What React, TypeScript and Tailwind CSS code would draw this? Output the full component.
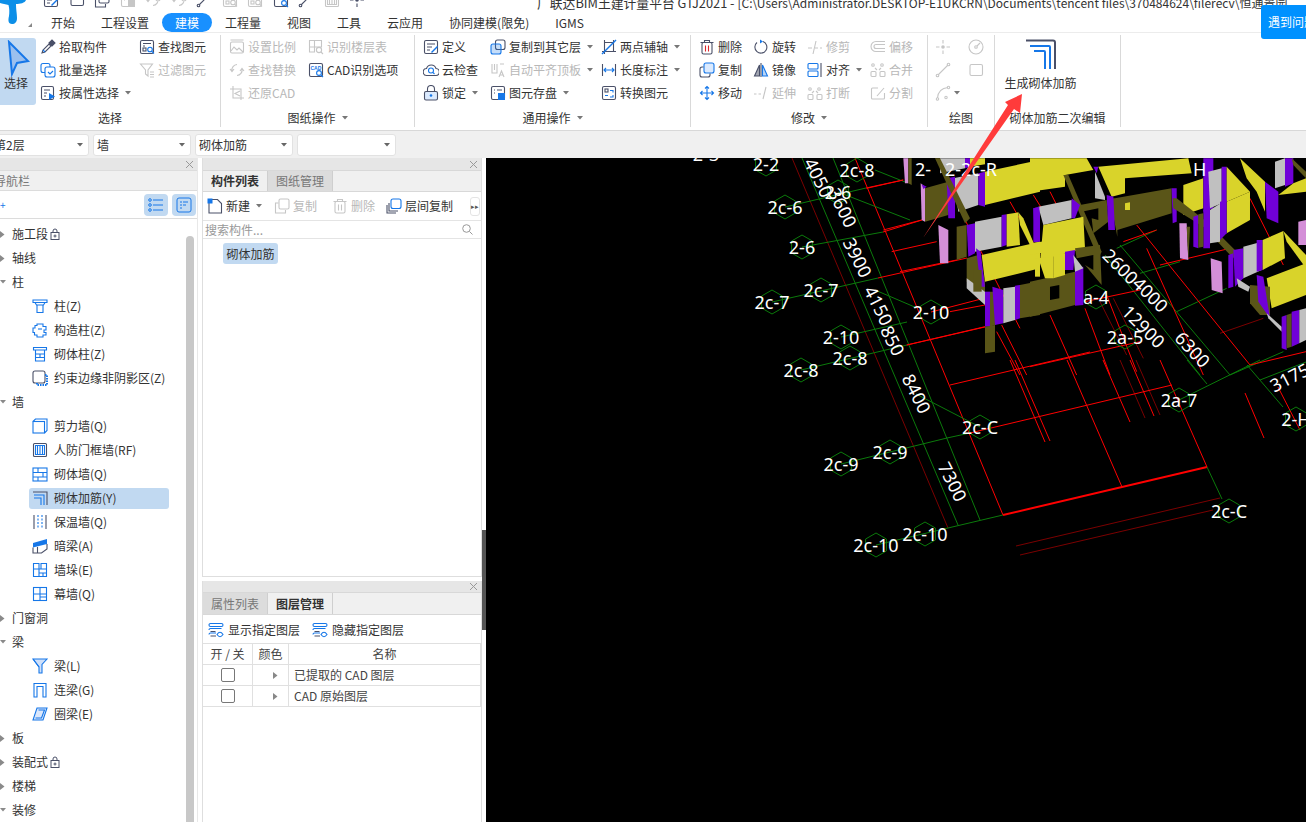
import React from "react";

const D = "#4a5068";
const B = "#1677e8";
const G = "#c6c6c6";
type P = { d: string; b: string };
const icons: Record<string, (p: P) => React.ReactNode> = {
  pick: ({ d, b }) => (<><path d="M2 14l1-3 6-6 2 2-6 6z" stroke={d} /><path d="M9 4l3-3 3 3-3 3z" fill={d} stroke={d} /><path d="M3 11l2 2" stroke={b} /></>),
  batch: ({ d, b }) => (<><rect x="1" y="1.500" width="9" height="9" rx="2" stroke={b} /><rect x="5" y="5" width="10" height="10" rx="2" stroke={b} fill="#fff" /><path d="M8 10l2 2 3-3" stroke={b} /></>),
  attr: ({ d, b }) => (<><rect x="1.500" y="1.500" width="12" height="13" rx="1.500" stroke={d} /><path d="M4 5h6M4 8h3M4 11h2" stroke={d} /><path d="M9 8l6 3.500-6 3.500z" fill={b} /></>),
  find: ({ d, b }) => (<><rect x="1.500" y="1.500" width="13" height="13" rx="1.500" stroke={d} /><path d="M4 4.500h8M4 7h2" stroke={d} /><rect x="4" y="9" width="3" height="3" stroke={d} /><circle cx="11" cy="10.500" r="2.300" stroke={b} /><path d="M13 12.500l2 2" stroke={b} /></>),
  filter: ({ d }) => (<><path d="M1.500 2h12L9 8v6L6.500 12V8z" stroke={d} /><path d="M11 10h4M11 12.500h4M11 15h4" stroke={d} /></>),
  scale: ({ d }) => (<><rect x="1.500" y="3" width="13" height="11" rx="1.500" stroke={d} /><path d="M2 12l3-4 3 3 2-2 4 4M1.500 1h13" stroke={d} /></>),
  floor: ({ d }) => (<><path d="M1.500 8V1.500h5V13h-5V8h12V1.500h-7M1.500 13" stroke={d} /><circle cx="11" cy="11" r="2.600" stroke={d} /><path d="M13 13l2 2" stroke={d} /></>),
  swap: ({ d }) => (<><path d="M3 9a5.500 5.500 0 0 1 5-6.500M13 7a5.500 5.500 0 0 1-5 6.500M1 7l2 2.500L5 7M11 9l2-2.500L15 9" stroke={d} /></>),
  cadopt: ({ d, b }) => (<><rect x="1.500" y="1.500" width="13" height="13" rx="1.500" stroke={d} /><text x="2.500" y="8" fontSize="5" fill={b} stroke="none" fontWeight="700" fontFamily="Liberation Sans">CAD</text><circle cx="11" cy="11" r="2.400" stroke={b} fill="#fff" /><path d="M13 13l2 2" stroke={b} /></>),
  restore: ({ d }) => (<><path d="M4 1v12h11M1 4h11v11" stroke={d} /><path d="M11 6L6 8.500 11 11" stroke={d} /></>),
  define: ({ d, b }) => (<><rect x="1.500" y="1.500" width="13" height="13" rx="1.500" stroke={d} /><path d="M4 5h8M4 8h5M4 11h3" stroke={d} /><path d="M8 13l6-6 1 1-6 6z" fill={b} /></>),
  cloud: ({ d, b }) => (<><path d="M4 13.500a3.500 3.500 0 0 1-.5-7 5 5 0 0 1 9.500 0 3.500 3.500 0 0 1-.500 7z" stroke={d} /><circle cx="8" cy="8.500" r="2.500" stroke={b} /><path d="M10 10.500l1.500 1.500" stroke={b} /></>),
  lock: ({ d, b }) => (<><rect x="1.500" y="6.500" width="13" height="8.500" rx="1.500" stroke={d} fill="#dbeafe" /><path d="M4.500 6.500V4a3.500 3.500 0 0 1 7 0v2.500" stroke={d} /><circle cx="8" cy="10.500" r="1.300" fill={b} /></>),
  copyto: ({ d, b }) => (<><rect x="5.500" y="1" width="9.500" height="9.500" rx="2" stroke={d} /><rect x="1" y="5" width="10" height="10" rx="2" fill={b} fillOpacity="0.25" stroke={b} /></>),
  autoalign: ({ d }) => (<><path d="M2 2v9h5V2M4.500 2v6M10 2h4" stroke={d} /><path d="M9 15l2.500-6 2.500 6M10 13h3" stroke={d} /></>),
  save: ({ d, b }) => (<><rect x="1.500" y="1.500" width="13" height="13" rx="1.500" stroke={d} /><path d="M4 5h1M7 5h5M4 8h1" stroke={d} /><rect x="8" y="8" width="7" height="7" fill={b} /></>),
  twopt: ({ d, b }) => (<><path d="M3.500 1v14M1 12.500h14M12.500 1v11M3.500 3.500h9" stroke={d} /><path d="M1 15L15 1" stroke={b} strokeWidth="1.500" /></>),
  dim: ({ d, b }) => (<><path d="M1.500 2v12M14.500 2v12" stroke={d} /><path d="M3 8h10M5 6L3 8l2 2M11 6l2 2-2 2" stroke={b} /></>),
  convert: ({ d, b }) => (<><rect x="1.500" y="1.500" width="13" height="13" rx="1.500" stroke={d} /><rect x="4" y="4" width="3" height="3" stroke={d} /><path d="M9 5.500h3v2M7 10.500H4M9 12h3v-2" stroke={b} /></>),
  del: ({ d }) => (<><path d="M1.500 3.500h13M5.500 3V1.500h5V3" stroke={d} /><rect x="3" y="3.500" width="10" height="11.500" rx="1.500" stroke={d} /><path d="M6.500 6.500v6M9.500 6.500v6" stroke={d === G ? G : "#d9262c"} /></>),
  copy: ({ b, d }) => (<><rect x="5" y="1" width="10" height="10" rx="2" stroke={b} fill="#dbeafe" /><path d="M4.500 5H3a2 2 0 0 0-2 2v6a2 2 0 0 0 2 2h6a2 2 0 0 0 2-2v-1.500" stroke={d} /></>),
  move: ({ b }) => (<><path d="M8 2v12M2 8h12M6 3.500L8 1.500l2 2M6 12.500l2 2 2-2M3.500 6L1.500 8l2 2M12.500 6l2 2-2 2" stroke={b} /></>),
  rotate: ({ d, b }) => (<><path d="M10 2.500A6 6 0 1 1 4 3.500" stroke={d} /><path d="M7 .5l3 2-3 2z" fill={b} /></>),
  mirror: ({ d, b }) => (<><path d="M8 1v14" stroke={d} /><path d="M6.500 3L1.500 14h5z" fill={d} fillOpacity=".5" stroke={d} /><path d="M9.500 3l5 11h-5z" fill={b} fillOpacity=".3" stroke={b} /></>),
  extend: ({ d }) => (<><path d="M1 9h2.500M5.500 9H8M10 14l3-12" stroke={d} /></>),
  trim: ({ d }) => (<><path d="M1 9h4M8 9h3M6 15l3-13M13 9h2" stroke={d} /></>),
  align: ({ b, d }) => (<><rect x="1" y="1.500" width="10" height="5.500" rx="1" stroke={b} /><rect x="1" y="9" width="10" height="5.500" rx="1" stroke={b} /><path d="M14 1v14" stroke={d} /></>),
  breakk: ({ d }) => (<><circle cx="3" cy="4" r="1.300" stroke={d} /><circle cx="12" cy="4" r="1.300" stroke={d} /><rect x="1" y="9.500" width="5" height="5" rx="1" stroke={d} /><rect x="10" y="9.500" width="5" height="5" rx="1" stroke={d} /><path d="M7 6L5 8M9 6l2 2" stroke={d} /></>),
  offset: ({ d }) => (<><path d="M15 2.500H6a5 5 0 0 0 0 10h9M15 5.500H6a2 2 0 0 0 0 4h9" stroke={d} /></>),
  merge: ({ d }) => (<><rect x="1" y="9.500" width="5" height="5" rx="1" stroke={d} /><rect x="10" y="9.500" width="5" height="5" rx="1" stroke={d} /><circle cx="3" cy="3" r="1.300" stroke={d} /><circle cx="12" cy="3" r="1.300" stroke={d} /><path d="M5 6l2 2M11 6L9 8" stroke={d} /></>),
  split: ({ d }) => (<><path d="M8 3H2.500a1 1 0 0 0-1 1v9a1 1 0 0 0 1 1h11a1 1 0 0 0 1-1V8" stroke={d} /><path d="M7 11l7-8" stroke={d} /></>),
  point: ({ d }) => (<><circle cx="8" cy="8" r="1.800" fill={d} /><path d="M8 1v3.500M8 11.500V15M1 8h3.500M11.500 8H15" stroke={d} /></>),
  gauge: ({ d }) => (<><circle cx="8" cy="8" r="7" stroke={d} /><circle cx="8" cy="8" r="1.300" stroke={d} /><path d="M9 7l3-3" stroke={d} /></>),
  line: ({ d }) => (<><path d="M3 13L13 3" stroke={d} /><circle cx="2.500" cy="13.500" r="1.300" stroke={d} /><circle cx="13.500" cy="2.500" r="1.300" stroke={d} /></>),
  rect: ({ d }) => (<><rect x="2" y="2.500" width="12.500" height="11" rx="1.500" stroke={d} /></>),
  arc: ({ d }) => (<><path d="M2.500 13C3 7 7 3 13 2.500" stroke={d} /><circle cx="2.500" cy="14" r="1.200" stroke={d} /><circle cx="13.500" cy="2.500" r="1.200" stroke={d} /><circle cx="11" cy="12.500" r="1.200" stroke={d} /></>),
  zhu: ({ b }) => (<><path d="M1 2h14v2.500H1zM3 4.500h10L11.500 7h-7zM5 7v7.500h6V7" stroke={b} /></>),
  gzz: ({ b }) => (<><path d="M5 2h6v2.500h3V8h-2v2.500h2V13h-3v2H5v-2H2.500v-2.500H1V6h2V3.500h2z" stroke={b} /><path d="M6 7h4" stroke={b} /></>),
  qtz: ({ b }) => (<><path d="M1.500 1.500h13v2.500h-13zM3.500 4v11h9V4M3.500 8h9M3.500 11.500h9M8 8v3.500" stroke={b} /></>),
  ysbj: ({ d, b }) => (<><rect x="1" y="1" width="12" height="12" rx="2" stroke={d} /><path d="M13 5h2v10H5v-2" stroke={b} strokeDasharray="1.500 1" strokeWidth="2" /></>),
  jlq: ({ b }) => (<><rect x="1" y="3.500" width="11.500" height="11.500" stroke={b} /><path d="M1 3.500L3.500 1H15v11.500L12.500 15" stroke={b} /></>),
  rfq: ({ d, b }) => (<><rect x="1.500" y="1.500" width="13" height="13" rx="1" stroke={d} /><path d="M5.500 3.500v9M8 3.500v9M10.500 3.500v9M3.500 3.500h9v9h-9z" stroke={b} /></>),
  qtq: ({ b }) => (<><rect x="1" y="2" width="14" height="13" stroke={b} /><path d="M1 6.500h14M1 11h14M6 2v4.500M11 6.500V11M6 11v4" stroke={b} /></>),
  qtjj: ({ d, b }) => (<><path d="M1 2h14v13" stroke={d} /><path d="M2 5h10v10" stroke={b} /><path d="M2 8h7v7" stroke={b} /></>),
  bwq: ({ d, b }) => (<><path d="M2 1v14M14 1v14" stroke={d} /><path d="M6 1v14M10 1v14" stroke={b} strokeDasharray="2 1.500" /></>),
  al: ({ d, b }) => (<><path d="M1 5l14-4v5L1 9.500z" fill={b} /><path d="M1 9.500V15h8.500l5.500-4V6M5.500 9v6" stroke={d} /></>),
  qd: ({ b }) => (<><path d="M1.500 1.500h5.500V7H1.500zM9 1.500h5.500V7H9zM1.500 7h13v7.500h-13zM7 7v7.500M11 11v3.500M7 11h7.500" stroke={b} /></>),
  mq: ({ b }) => (<><rect x="1.500" y="1.500" width="13" height="13" stroke={b} /><path d="M1.500 8h13M8 1.500V15M8 11h6.500" stroke={b} /></>),
  liang: ({ b }) => (<><path d="M1 1h14L10 6.500v8.500H7V9z" stroke={b} fill="#cfe0fa" /><path d="M1 1l6 8" stroke={b} /></>),
  ll: ({ b }) => (<><path d="M2 15V1.500h12V15h-3V4.500H5V15z" stroke={b} /></>),
  ql: ({ b }) => (<><path d="M5 2h10l-4 12H1z" stroke={b} fill="#dbe7fb" /><path d="M6.500 4h6l-3 8h-6" stroke={b} /></>),
  newf: ({ d, b }) => (<><path d="M2 1.500h8.500l4 4V15H2z" stroke={d} /><rect x="0.500" y="0.500" width="5" height="5" fill={b} stroke="none" /></>),
  copy2: ({ d }) => (<><rect x="5" y="1" width="10" height="10" rx="1.500" stroke={d} /><path d="M4.500 5H1.500v10h10v-3" stroke={d} /></>),
  floorcopy: ({ d, b }) => (<><rect x="5" y="1" width="10" height="9.500" rx="2" stroke={b} /><path d="M3 5v8h9M1 7v8h9" stroke={d} /></>),
  layerEye: ({ d, b }) => (<><path d="M1 3a1.500 1.500 0 0 1 1.500-1.500h11a1.500 1.500 0 0 1 0 3h-11A1.500 1.500 0 0 1 1 3zM1 8a1.500 1.500 0 0 1 1.500-1.500h11M1 12.500A1.500 1.500 0 0 1 2.500 11H8" stroke={b} /><path d="M2.500 9.500h5M2.500 14H8" stroke={d} /><path d="M9 12.500c2-3 4-3 6 0-2 3-4 3-6 0z" stroke={b} /></>),
};

function Ic({ n, dis, size = 16 }: { n: string; dis?: boolean; size?: number }) {
  const r = icons[n]({ d: dis ? G : D, b: dis ? G : B });
  return <svg width={size} height={size} viewBox="0 0 16 16" fill="none" strokeWidth="1.100" className="shrink-0">{r}</svg>;
}

function Caret({ tight }: { tight?: boolean }) {
  return <svg width="6" height="4" viewBox="0 0 6 4" className={`shrink-0 ${tight ? "ml-[3px]" : "ml-[6px]"}`}><path d="M0 0h6L3 3.500z" fill="#777" /></svg>;
}

function Item({ n, t, dis, caret }: { n: string; t: string; dis?: boolean; caret?: boolean }) {
  return (
    <div className={`flex items-center h-[23px] gap-[3px] whitespace-nowrap ${dis ? "text-[#b8b8b8]" : "text-[#333]"}`}>
      <Ic n={n} dis={dis} />
      <span>{t}</span>
      {caret && <Caret tight />}
    </div>
  );
}

function Group({ w, label, caret, children }: { w: string; label: string; caret?: boolean; children: React.ReactNode }) {
  return (
    <div className={`${w} shrink-0 h-[92px] border-r border-[#d9d9d9] flex flex-col`}>
      <div className="h-[72px] flex">{children}</div>
      <div className="h-[20px] pt-[2px] flex items-center justify-center text-[#333]">
        <span>{label}</span>
        {caret && <Caret />}
      </div>
    </div>
  );
}

const quick = ["define", "rect", "copy2", "save", "swap", "swap", "line", "find", "find", "cadopt", "line", "rfq", "point"];
const tabs = ["开始", "工程设置", "建模", "工程量", "视图", "工具", "云应用", "协同建模(限免)", "IGMS"];

type Row = { t: string; open?: boolean; lock?: boolean; icon?: string; sel?: boolean };
const tree: Row[] = [
  { t: "施工段", lock: true },
  { t: "轴线" },
  { t: "柱", open: true },
  { t: "柱(Z)", icon: "zhu" },
  { t: "构造柱(Z)", icon: "gzz" },
  { t: "砌体柱(Z)", icon: "qtz" },
  { t: "约束边缘非阴影区(Z)", icon: "ysbj" },
  { t: "墙", open: true },
  { t: "剪力墙(Q)", icon: "jlq" },
  { t: "人防门框墙(RF)", icon: "rfq" },
  { t: "砌体墙(Q)", icon: "qtq" },
  { t: "砌体加筋(Y)", icon: "qtjj", sel: true },
  { t: "保温墙(Q)", icon: "bwq" },
  { t: "暗梁(A)", icon: "al" },
  { t: "墙垛(E)", icon: "qd" },
  { t: "幕墙(Q)", icon: "mq" },
  { t: "门窗洞" },
  { t: "梁", open: true },
  { t: "梁(L)", icon: "liang" },
  { t: "连梁(G)", icon: "ll" },
  { t: "圈梁(E)", icon: "ql" },
  { t: "板" },
  { t: "装配式", lock: true },
  { t: "楼梯" },
  { t: "装修", open: true },
];

function TreeRow({ r }: { r: Row }) {
  if (r.icon) {
    return (
      <div className="h-[24px] w-[169px] flex items-center pl-[29px] text-[#333]">
        <div className={`h-[21px] w-[140px] rounded-[3px] flex items-center pl-[3px] gap-[6px] ${r.sel ? "bg-[#c1d9f1]" : ""}`}>
          <Ic n={r.icon} />
          <span className="whitespace-nowrap">{r.t}</span>
        </div>
      </div>
    );
  }
  return (
    <div className="h-[24px] flex items-center text-[#333]">
      <div className="w-[12px] flex items-center">
        {r.open ? (
          <svg width="6" height="4" viewBox="0 0 6 4"><path d="M0 0h6L3 3.500z" fill="#8a8a8a" /></svg>
        ) : (
          <svg width="5" height="7" viewBox="0 0 5 7"><path d="M0 0l4.500 3.500L0 7z" fill="#8a8a8a" /></svg>
        )}
      </div>
      <span>{r.t}</span>
      {r.lock && (
        <svg width="10" height="12" viewBox="0 0 10 12" fill="none" stroke={D} className="ml-[2px]"><rect x="1" y="4.500" width="8" height="7" /><path d="M3 4.500V3a2 2 0 0 1 4 0v1.500" /><circle cx="5" cy="8" r="1" /></svg>
      )}
    </div>
  );
}

function CloseX() {
  return <svg width="7" height="7" viewBox="0 0 7 7" stroke="#999" strokeWidth="1"><path d="M0 0l7 7M7 0L0 7" /></svg>;
}

function Hex({ x, y }: { x: number; y: number }) {
  const pts = [0, 60, 120, 180, 240, 300].map((a) => {
    const r = (a * Math.PI) / 180;
    return `${x + 12 * Math.sin(r)},${y - 12 * Math.cos(r)}`;
  }).join(" ");
  return <polygon points={pts} fill="none" stroke="#0b7a0b" strokeWidth="1" />;
}

const hexLabels: [string, number, number][] = [
  ["2-2", 766, 164], ["2c-8", 857, 170], ["2-6", 838, 192], ["2c-6", 785, 207], ["2-6", 802, 247],
  ["2c-7", 821, 290], ["2c-7", 772, 302], ["2-10", 931, 312], ["2-10", 841, 337], ["2c-8", 850, 358],
  ["2c-8", 801, 370], ["2c-C", 980, 427], ["2c-9", 890, 452], ["2c-9", 841, 464], ["2c-10", 925, 534],
  ["2c-10", 876, 545], ["2c-C", 1229, 511], ["2a-7", 1179, 400], ["2-H", 1296, 419], ["a-4", 1096, 297], ["2a-5", 1125, 337],
];
const dims: [string, number, number, number][] = [
  ["4050", 818, 178, 63], ["3600", 842, 208, 63], ["3900", 857, 258, 63], ["4150", 878, 306, 63], ["850", 892, 341, 63],
  ["8400", 916, 394, 63], ["7300", 952, 482, 63], ["2600", 1120, 267, 45], ["4000", 1150, 295, 45], ["12900", 1143, 327, 45], ["6300", 1192, 350, 47], ["3175", 1290, 378, -27],
];

const L = ({ p, c = "#f00", w = 1 }: { p: number[]; c?: string; w?: number }) => (
  <line x1={p[0]} y1={p[1]} x2={p[2]} y2={p[3]} stroke={c} strokeWidth={w} />
);

const green = "#0b7a0b";
const dred = "#7a0000";
const Y = "#d9d32a", O = "#5a5518", U = "#7000d8", E = "#c0c0c0", K = "#d48fd8";

const b8: [string, string][] = [
  [K, "490,10 505,10 505,85 495,85"], [O, "505,10 515,10 515,90 505,85"],
  [O, "555,100 625,80 625,180 555,200"], [K, "542,85 555,95 555,200 545,195"], [U, "545,88 560,95 550,102"],
  [E, "600,10 675,10 675,40 600,55"], [U, "675,10 690,10 690,35 675,40"], [Y, "690,10 735,10 735,28 690,35"],
  [E, "640,70 715,55 715,150 655,170"], [U, "620,70 645,65 645,190 625,190"], [U, "715,55 735,50 735,155 715,150"],
  [Y, "735,50 900,15 900,110 735,150"], [O, "585,10 600,10 690,190 675,205"],
  [K, "595,210 625,225 625,325 600,325"], [O, "650,215 680,210 680,305 650,315"], [U, "680,210 705,205 705,295 685,305"],
  [E, "705,200 785,185 785,275 705,290"], [U, "785,180 800,178 800,270 785,275"], [Y, "800,178 835,172 840,270 800,275"],
  [Y, "835,172 850,190 880,262 875,280 840,210"], [U, "880,160 900,155 900,260 880,262"],
  [O, "680,310 715,300 735,380 735,410 680,380"], [Y, "725,300 900,260 900,340 735,380"], [U, "708,280 722,290 735,395 722,395"],
  [E, "680,370 735,410 735,450 680,400"], [O, "700,345 725,345 725,410 700,410"], [U, "735,410 750,410 750,515 735,515"],
  [O, "735,515 765,510 765,590 735,595"], [O, "750,410 765,410 765,510 750,515"], [U, "757,395 790,405 790,505 765,510"],
  [E, "790,400 825,395 825,495 790,505"], [U, "825,392 840,390 840,490 825,495"], [O, "840,390 900,378 900,480 840,490"],
  [Y, "885,310 900,310 900,365 885,365"],
];

const b9: [string, string][] = [
  [Y, "0,10 170,10 190,45 105,60 105,95 0,110"], [O, "100,60 115,60 215,290 205,310"], [U, "190,35 205,35 200,55"],
  [E, "195,50 225,125 225,135 195,130"], [Y, "205,35 475,10 485,55 285,70 285,115 245,125"],
  [O, "255,130 425,100 425,175 262,225 262,245 240,130"], [Y, "285,145 300,142 300,165 285,165"],
  [O, "150,150 230,135 235,200 190,235 185,190 205,195 205,160 155,170"], [U, "230,120 250,125 255,225 235,225"],
  [E, "25,155 125,135 125,190 40,210"], [U, "10,160 28,155 30,250 15,258"], [U, "125,130 150,150 135,190 125,190"],
  [Y, "40,210 160,185 165,280 70,305 70,365 30,320"], [Y, "0,265 50,258 55,290 0,300"],
  [O, "0,380 135,350 135,450 0,485"], ["#000", "60,395 88,390 88,430 60,435"],
  [O, "135,280 210,270 215,390 165,330 190,345 190,300 140,310"], [U, "105,290 135,285 130,345 105,345"], [U, "135,340 160,335 160,450 135,452"],
  [E, "130,300 160,340 135,350"], [Y, "70,300 105,295 105,360 70,370"], [Y, "25,310 70,305 70,370 45,370"],
  [U, "425,100 440,100 440,200 428,205"], [Y, "460,90 520,70 520,160 460,180"], [U, "520,10 550,10 550,160 520,170"],
  [E, "535,50 575,40 575,145 540,160"], [U, "575,35 590,35 590,140 575,145"], [Y, "590,35 660,110 590,140"], [Y, "590,140 660,110 660,195 590,235"],
  [O, "428,130 440,130 530,200 620,290 610,310 520,215 430,160"], [U, "520,165 540,160 540,280 520,280"], [E, "540,165 572,145 570,260 540,265"], [U, "570,140 590,135 590,235 570,255"],
  [U, "490,185 505,180 505,280 490,275"], [O, "505,178 520,175 520,275 505,278"],
  [K, "448,205 470,205 475,315 450,310"], [O, "470,215 480,215 475,315"],
  [K, "542,310 575,320 578,415 545,405"], [U, "595,300 610,295 610,395 595,400"], [U, "610,285 640,280 640,370 615,395"], [E, "640,275 695,260 695,345 640,370"],
  [U, "680,255 698,255 698,345 680,350"], [Y, "698,255 760,228 765,310 698,345"], [Y, "760,228 828,300 828,340 770,260"],
  [Y, "630,10 705,80 705,170 680,110 650,70"], [U, "705,80 745,110 745,205 710,190"], [E, "735,20 765,10 765,90 735,100"], [U, "765,10 790,10 790,85 765,95"], [Y, "790,85 828,70 828,110 745,120"],
  [O, "785,10 828,50 828,70 790,30"], [K, "805,200 828,195 828,270 805,270"],
  [Y, "710,370 828,325 828,420 725,460"], [O, "660,390 720,395 720,480 690,480 660,445"], [U, "680,360 700,365 720,490 685,440"],
  [E, "620,370 660,395 655,410 625,395"], [E, "710,475 755,515 755,530 715,490"], [U, "755,485 770,480 770,585 755,580"], [O, "770,480 785,475 785,575 770,580"],
  [U, "785,470 808,465 808,565 785,575"], [E, "808,465 828,460 828,555 808,565"],
];

function Canvas() {
  return (
    <svg viewBox="486 158 820 664" width="820" height="664" className="block">
      <rect x="486" y="158" width="820" height="664" fill="#000" />
      <L p={[792, 158, 948, 528]} c={dred} />
      <L p={[802, 158, 958, 525]} c={green} />
      <L p={[833, 158, 980, 520]} c={green} />
      <L p={[855, 158, 1003, 515]} />
      <L p={[1003, 515, 1207, 467]} w={2} />
      <L p={[948, 528, 1003, 515]} c={green} />
      <L p={[1207, 467, 1222, 499]} c={green} />
      <L p={[1016, 546, 1220, 498]} c={dred} />
      <L p={[1020, 555, 1213, 510]} c={dred} />
      <L p={[1067, 360, 1122, 487]} />
      <L p={[1010, 360, 1045, 442]} />
      <L p={[1015, 360, 1050, 441]} />
      <L p={[1103, 360, 1130, 422]} />
      <L p={[1120, 360, 1145, 418]} c={dred} />
      <L p={[1130, 360, 1154, 416]} />
      <L p={[1136, 360, 1160, 415]} c={dred} />
      <L p={[1160, 360, 1207, 467]} />
      <L p={[950, 385, 1090, 352]} />
      <L p={[970, 433, 1172, 385]} />
      <L p={[841, 464, 947, 438]} c={green} />
      <L p={[947, 438, 970, 433]} c={green} />
      <L p={[876, 545, 948, 528]} c={green} />
      <L p={[801, 370, 907, 345]} c={green} />
      <L p={[907, 345, 985, 327]} />
      <L p={[772, 302, 878, 278]} c={green} />
      <L p={[878, 278, 967, 258]} />
      <L p={[841, 337, 907, 322]} c={green} />
      <L p={[931, 312, 985, 298]} />
      <L p={[785, 207, 866, 188]} c={green} />
      <L p={[866, 188, 903, 180]} />
      <L p={[802, 247, 883, 232]} c={green} />
      <L p={[883, 232, 922, 220]} />
      <L p={[838, 192, 910, 220]} c={green} />
      <L p={[875, 290, 917, 308]} c={green} />
      <L p={[916, 394, 980, 427]} c={green} />
      <L p={[875, 170, 905, 182]} c={green} />
      <L p={[1187, 360, 1207, 384]} c={green} />
      <L p={[1179, 400, 1260, 360]} c={green} />
      <L p={[1260, 380, 1306, 362]} c={green} />
      <L p={[1247, 365, 1283, 407]} c={green} />
      <L p={[1278, 387, 1300, 430]} />
      <L p={[1245, 393, 1264, 438]} />
      <g transform="translate(1030,155) scale(.33333)">
        <L p={[225, 300, 510, 660]} c={green} w={3} />
        <L p={[270, 270, 600, 660]} c={green} w={3} />
        <L p={[260, 280, 380, 225]} c={green} w={3} />
        <L p={[330, 355, 450, 320]} c={green} w={3} />
        <L p={[390, 330, 600, 280]} w={3} />
        <L p={[440, 470, 590, 400]} c={green} w={3} />
        <L p={[570, 535, 700, 490]} c={dred} w={3} />
        <L p={[320, 210, 660, 630]} w={3} />
        <L p={[350, 280, 520, 660]} w={3} />
        <L p={[60, 480, 140, 660]} w={3} />
        <L p={[165, 460, 240, 660]} w={3} />
        <L p={[210, 440, 290, 600]} c={dred} w={3} />
        <L p={[250, 430, 340, 610]} c={dred} w={3} />
        <L p={[230, 420, 320, 650]} w={3} />
        <L p={[0, 635, 330, 560]} w={3} />
        <L p={[165, 440, 330, 405]} w={3} />
        <L p={[280, 260, 380, 225]} w={3} />
        <L p={[660, 130, 760, 330]} w={3} />
        <L p={[600, 660, 760, 590]} c={green} w={3} />
        <L p={[660, 630, 828, 590]} w={3} />
        <L p={[10, 120, 60, 200]} w={3} />
        <L p={[60, 110, 100, 190]} w={3} />
      </g>
      <g transform="translate(740,155) scale(.33333)">
        <L p={[660, 165, 840, 520]} w={3} />
        <L p={[770, 530, 840, 660]} w={3} />
        <L p={[785, 510, 860, 660]} w={3} />
        <L p={[810, 140, 900, 300]} w={3} />
        <L p={[630, 470, 735, 450]} w={3} />
        <L p={[500, 570, 735, 515]} w={3} />
        <L p={[480, 350, 650, 315]} w={3} />
        <L p={[455, 290, 590, 260]} w={3} />
        <L p={[380, 100, 490, 75]} w={3} />
        <L p={[430, 225, 545, 195]} w={3} />
        {b8.map(([c, p], i) => <polygon key={i} points={p} fill={c} />)}
      </g>
      <g transform="translate(1030,155) scale(.33333)">
        {b9.map(([c, p], i) => <polygon key={i} points={p} fill={c} />)}
      </g>
      {hexLabels.map(([t, x, y], i) => <Hex key={i} x={x} y={y} />)}
      {hexLabels.map(([t, x, y], i) => (
        <text key={i} x={x} y={y + 6.500} textAnchor="middle" fontSize="18" fill="#fff" fontFamily="Noto Sans, sans-serif">{t}</text>
      ))}
      {dims.map(([t, x, y, r], i) => (
        <text key={i} x={x} y={y + 6} textAnchor="middle" fontSize="18" fill="#fff" fontFamily="Noto Sans, sans-serif" transform={`rotate(${r} ${x} ${y})`}>{t}</text>
      ))}
      <text x="706" y="161" textAnchor="middle" fontSize="18" fill="#fff" fontFamily="Noto Sans, sans-serif">2-3</text>
      <text x="915" y="176" fontSize="18" fill="#fff" fontFamily="Noto Sans, sans-serif">2-</text>
      <text x="945" y="176" fontSize="18" fill="#fff" fontFamily="Noto Sans, sans-serif">2-2c-R</text>
      <text x="1193" y="176" fontSize="18" fill="#fff" fontFamily="Noto Sans, sans-serif">H</text>
    </svg>
  );
}

export default function App() {
  return (
    <div className="relative w-[1306px] h-[822px] overflow-hidden bg-white flex flex-col text-[12px] leading-none text-[#333] font-['Noto_Sans_CJK_SC','Noto_Sans',sans-serif]">
      {/* title */}
      <div className="h-[13px] shrink-0 relative overflow-hidden flex">
        <div className="w-[43px] shrink-0" />
        <div className="flex gap-[9.500px] -mt-[8px] h-[16px]">
          {quick.map((n, i) => <Ic key={i} n={n} dis={i === 3 || i === 4 || i === 5 || i === 7 || i === 8 || i === 11} />)}
        </div>
        <div className="ml-[172px] -mt-[5px] leading-[16px] whitespace-nowrap text-[#333]">
          <span className="text-[12.800px]">广联达BIM土建计量平台 GTJ2021 - </span>
          <span className="text-[12px]">[C:\Users\Administrator.DESKTOP-E1UKCRN\Documents\tencent files\370484624\filerecv\恒通景园</span>
        </div>
      </div>

      {/* tabs */}
      <div className="h-[20px] shrink-0 flex items-center pl-[38px] border-b border-[#ececec]">
        {tabs.map((t) => (
          <div key={t} className={`h-[19px] px-[13px] flex items-center rounded-full whitespace-nowrap ${t === "建模" ? "bg-[#1890ff] text-white" : "text-[#333]"}`}>{t}</div>
        ))}
      </div>

      {/* ribbon */}
      <div className="h-[98px] shrink-0 flex pt-[2px] border-b border-[#d8d8d8]">
        <Group w="w-[221px]" label="选择">
          <div className="w-[40px] -ml-[4px] h-[67px] mt-[3px] bg-[#c1d9f1] rounded-r-[3px] flex flex-col items-center shrink-0">
            <svg width="26" height="37" viewBox="0 0 26 37" fill="none" className="mt-[2px] ml-[4px]"><path d="M4 2l19 19-11 2-5 11z" stroke={B} strokeWidth="2" fill="#9cc0ee" /></svg>
            <span>选择</span>
          </div>
          <div className="w-[103px] pl-[4px]">
            <Item n="pick" t="拾取构件" />
            <Item n="batch" t="批量选择" />
            <Item n="attr" t="按属性选择" caret />
          </div>
          <div>
            <Item n="find" t="查找图元" />
            <Item n="filter" t="过滤图元" dis />
          </div>
        </Group>
        <Group w="w-[194px]" label="图纸操作" caret>
          <div className="w-[87px] pl-[8px]">
            <Item n="scale" t="设置比例" dis />
            <Item n="swap" t="查找替换" dis />
            <Item n="restore" t="还原CAD" dis />
          </div>
          <div>
            <Item n="floor" t="识别楼层表" dis />
            <Item n="cadopt" t="CAD识别选项" />
          </div>
        </Group>
        <Group w="w-[276px]" label="通用操作" caret>
          <div className="w-[75px] pl-[8px]">
            <Item n="define" t="定义" />
            <Item n="cloud" t="云检查" />
            <Item n="lock" t="锁定" caret />
          </div>
          <div className="w-[111px]">
            <Item n="copyto" t="复制到其它层" caret />
            <Item n="autoalign" t="自动平齐顶板" dis caret />
            <Item n="save" t="图元存盘" caret />
          </div>
          <div>
            <Item n="twopt" t="两点辅轴" caret />
            <Item n="dim" t="长度标注" caret />
            <Item n="convert" t="转换图元" />
          </div>
        </Group>
        <Group w="w-[237px]" label="修改" caret>
          <div className="w-[62px] pl-[8px]">
            <Item n="del" t="删除" />
            <Item n="copy" t="复制" />
            <Item n="move" t="移动" />
          </div>
          <div className="w-[54px]">
            <Item n="rotate" t="旋转" />
            <Item n="mirror" t="镜像" />
            <Item n="extend" t="延伸" dis />
          </div>
          <div className="w-[63px]">
            <Item n="trim" t="修剪" dis />
            <Item n="align" t="对齐" caret />
            <Item n="breakk" t="打断" dis />
          </div>
          <div>
            <Item n="offset" t="偏移" dis />
            <Item n="merge" t="合并" dis />
            <Item n="split" t="分割" dis />
          </div>
        </Group>
        <Group w="w-[67px]" label="绘图">
          <div className="w-[40px] pl-[7px]">
            <Item n="point" t="" dis />
            <Item n="line" t="" dis />
            <div className="flex items-center h-[23px]">
              <Ic n="arc" dis />
              <Caret tight />
            </div>
          </div>
          <div>
            <Item n="gauge" t="" dis />
            <Item n="rect" t="" dis />
          </div>
        </Group>
        <Group w="w-[126px]" label="砌体加筋二次编辑">
          <div className="w-full flex flex-col items-center pr-[34px]">
            <svg width="31" height="31" viewBox="0 0 31 31" fill="none" className="mt-[4px]">
              <path d="M1 1.500h27a2 2 0 0 1 2 2V30" stroke={D} strokeWidth="2" />
              <path d="M5 7h19a1 1 0 0 1 1 1v22" stroke={B} strokeWidth="2" />
              <path d="M9 12h10a1 1 0 0 1 1 1v17" stroke={B} strokeWidth="2" />
            </svg>
            <span className="mt-[7px] whitespace-nowrap">生成砌体加筋</span>
          </div>
        </Group>
      </div>

      {/* combos */}
      <div className="h-[27px] shrink-0 bg-[#f0f0f0] flex items-center gap-[4px] overflow-hidden">
        {[["第2层", "w-[99px] -ml-[10px]"], ["墙", "w-[98px]"], ["砌体加筋", "w-[98px]"], ["", "w-[99px]"]].map(([t, w], i) => (
          <div key={i} className={`${w} h-[22px] bg-white rounded-[3px] border border-[#e2e2e2] flex items-center justify-between px-[3px] shrink-0`}>
            <span>{t}</span>
            <svg width="6" height="4" viewBox="0 0 6 4" className="mr-[2px]"><path d="M0 0h6L3 3.500z" fill="#666" /></svg>
          </div>
        ))}
      </div>

      {/* main */}
      <div className="flex-1 min-h-0 flex">
        {/* nav */}
        <div className="w-[198px] shrink-0 flex flex-col border-r border-[#e8e8e8]">
          <div className="h-[12px] bg-[#e6e6e6] flex items-center justify-end pr-[4px]"><CloseX /></div>
          <div className="h-[21px] bg-[#f0f0f0] border-y border-[#dcdcdc] flex items-center text-[#777] overflow-hidden"><span className="-ml-[6px]">导航栏</span></div>
          <div className="h-[28px] flex items-center border-b border-[#dcdcdc] pr-[1px] justify-between">
            <span className="text-[#1677e8] text-[10px]">+</span>
            <div className="flex gap-[4px]">
              <div className="w-[24px] h-[22px] rounded-[4px] bg-[#c1d9f1] flex items-center justify-center">
                <svg width="16" height="14" viewBox="0 0 16 14" fill="none" stroke={B}><circle cx="2" cy="2" r="1.300" /><circle cx="2" cy="7" r="1.300" /><circle cx="2" cy="12" r="1.300" /><path d="M5 2h10M5 7h10M5 12h10" /></svg>
              </div>
              <div className="w-[24px] h-[22px] rounded-[4px] bg-[#c1d9f1] flex items-center justify-center">
                <svg width="16" height="16" viewBox="0 0 16 16" fill="none" stroke={B}><rect x="1" y="1" width="14" height="14" rx="2" /><path d="M4 5h2M7 5h5M4 8h2M7 8h3M4 11h2" /></svg>
              </div>
            </div>
          </div>
          <div className="flex-1 min-h-0 flex pt-[3px] overflow-hidden">
            <div className="w-[186px] shrink-0">
              {tree.map((r) => <TreeRow key={r.t} r={r} />)}
            </div>
            <div className="w-[8px] mt-[14px] h-[620px] rounded-t-[4px] bg-[#c8c8c8]" />
          </div>
        </div>

        {/* middle */}
        <div className="w-[288px] shrink-0 flex pl-[4px]">
          <div className="w-[280px] shrink-0 flex flex-col">
            <div className="h-[419px] flex flex-col border border-[#dedede] border-t-0">
              <div className="h-[12px] bg-[#e6e6e6] flex items-center justify-end pr-[4px]"><CloseX /></div>
              <div className="h-[22px] bg-[#f0f0f0] border-y border-[#d8d8d8] flex">
                <div className="w-[65px] flex items-center justify-center font-bold border-r border-[#cfcfcf]">构件列表</div>
                <div className="w-[65px] flex items-center justify-center text-[#777] bg-[#dcdcdc] border-r border-[#cfcfcf]">图纸管理</div>
              </div>
              <div className="h-[29px] flex items-center border-b border-[#e4e4e4] pl-[4px] relative">
                <Item n="newf" t="新建" caret />
                <div className="w-[12px]" />
                <Item n="copy2" t="复制" dis />
                <div className="w-[15px]" />
                <Item n="del" t="删除" dis />
                <div className="w-[11px]" />
                <Item n="floorcopy" t="层间复制" />
                <div className="absolute right-[1px] top-[5px] w-[10px] h-[19px] rounded-[3px] border border-[#e4e4e4] flex items-center justify-center text-[7px] text-[#555]">▸▸</div>
              </div>
              <div className="h-[18px] flex items-center justify-between border-b border-[#e4e4e4] pl-[2px] pr-[8px] text-[#999]">
                <span>搜索构件...</span>
                <svg width="11" height="11" viewBox="0 0 11 11" fill="none" stroke="#999"><circle cx="4.500" cy="4.500" r="3.800" /><path d="M7.500 7.500l3 3" /></svg>
              </div>
              <div className="pt-[4px] pl-[20px]">
                <div className="w-[55px] h-[21px] rounded-[3px] bg-[#c1d9f1] flex items-center justify-center">砌体加筋</div>
              </div>
            </div>
            <div className="h-[4px]" />
            <div className="flex-1 flex flex-col border border-[#dedede] border-t-0 border-b-0">
              <div className="h-[11px] bg-[#e6e6e6] flex items-center justify-end pr-[4px]"><CloseX /></div>
              <div className="h-[23px] bg-[#f0f0f0] border-y border-[#d8d8d8] flex">
                <div className="w-[65px] flex items-center justify-center text-[#777] bg-[#dcdcdc] border-r border-[#cfcfcf]">属性列表</div>
                <div className="w-[65px] flex items-center justify-center font-bold border-r border-[#cfcfcf]">图层管理</div>
              </div>
              <div className="h-[28px] flex items-center pl-[5px] pt-[2px] gap-[4px]">
                <Ic n="layerEye" /><span>显示指定图层</span>
                <div className="w-[4px]" />
                <Ic n="layerEye" /><span>隐藏指定图层</span>
              </div>
              <div className="border-y border-[#e0e0e0] grid grid-cols-[50px_36px_1fr] text-[#444]">
                {["开 / 关", "颜色", "名称"].map((t) => (
                  <div key={t} className="h-[20px] flex items-center justify-center border-r border-[#e0e0e0]">{t}</div>
                ))}
                {["已提取的 CAD 图层", "CAD 原始图层"].map((t) => (
                  <React.Fragment key={t}>
                    <div className="h-[21px] border-t border-r border-[#e0e0e0] flex items-center justify-center"><div className="w-[14px] h-[14px] rounded-[2px] border border-[#777]" /></div>
                    <div className="h-[21px] border-t border-r border-[#e0e0e0] flex items-center justify-center pl-[10px]"><svg width="5" height="7" viewBox="0 0 5 7"><path d="M0 0l4.500 3.500L0 7z" fill="#888" /></svg></div>
                    <div className="h-[21px] border-t border-r border-[#e0e0e0] flex items-center pl-[5px]">{t}</div>
                  </React.Fragment>
                ))}
              </div>
            </div>
          </div>
          <div className="w-[4px] shrink-0 flex flex-col">
            <div className="h-[372px]" />
            <div className="h-[100px] bg-[#555]" />
          </div>
        </div>

        <div className="flex-1 min-w-0 overflow-hidden"><Canvas /></div>
      </div>

      {/* logo */}
      <svg className="absolute left-0 top-0" width="34" height="30" viewBox="0 0 34 30">
        <path d="M0 0h26c-1 3-6 4-10 4 0 6 1 9 1 14 0 4-2 6-5 6-4 0-4-4-3-8 .5-4 .5-7-.5-11C6 4 2 4 0 3z" fill="#0c8fe8" />
        <path d="M28 27l4-4v4z" fill="#888" />
      </svg>

      {/* help */}
      <div className="absolute right-0 top-[5px] w-[45px] h-[34px] bg-[#0091ff] rounded-bl-[3px] rounded-tl-[3px] text-white flex items-center pl-[7px] overflow-hidden whitespace-nowrap">遇到问题</div>

      {/* annotation arrow */}
      <svg className="absolute left-0 top-0 pointer-events-none" width="1306" height="260" viewBox="0 0 1306 260">
        <polygon points="1022,94 1020,113 1014,109 923,238 1008,105 1005,102" fill="#ff3b3b" />
      </svg>
    </div>
  );
}
